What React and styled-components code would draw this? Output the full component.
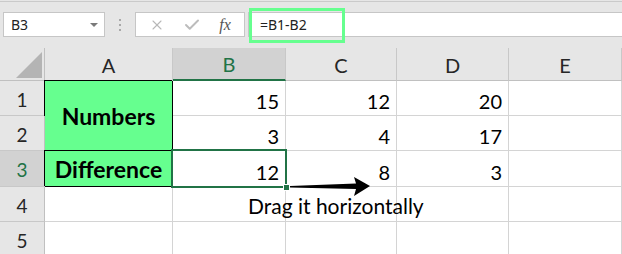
import React from 'react';
import styled, { createGlobalStyle } from 'styled-components';
import { X, Check } from 'lucide-react';

const GlobalStyle = createGlobalStyle`
  html, body { margin: 0; padding: 0; background: #fff; }
  body {
    width: 622px;
    height: 254px;
    overflow: hidden;
    font-family: Lato, "Liberation Sans", sans-serif;
  }
`;

const Window = styled.div`
  width: 622px;
  height: 254px;
  overflow: hidden;
`;

const Toolbar = styled.div`
  height: 48px;
  box-sizing: border-box;
  display: flex;
  align-items: flex-start;
  padding: 12px 0 0 3px;
  background: linear-gradient(#e6e6e6 1px, #cacaca 1px 2px, #e6e6e6 2px);
  font-family: "Noto Sans", "Open Sans", sans-serif;
  font-size: 14px;
  color: #222;
`;

const NameBox = styled.div`
  width: 102px;
  height: 25px;
  box-sizing: border-box;
  border: 1px solid #c6c6c6;
  background: #fff;
  display: flex;
  align-items: center;
  justify-content: space-between;
  padding: 0 6px 0 7px;
`;

const Caret = styled.span`
  width: 0;
  height: 0;
  border-left: 4px solid transparent;
  border-right: 4px solid transparent;
  border-top: 4px solid #7a7a7a;
`;

const Grip = styled.div`
  width: 30px;
  height: 25px;
  display: flex;
  flex-direction: column;
  align-items: center;
  justify-content: center;
  gap: 3px;

  span {
    width: 2px;
    height: 2px;
    background: #a8a8a8;
  }
`;

const FxBox = styled.div`
  width: 110px;
  height: 25px;
  box-sizing: border-box;
  border: 1px solid #c6c6c6;
  background: #fff;
  display: flex;
  align-items: center;
  justify-content: space-around;
  padding: 0 4px;
`;

const Fx = styled.span`
  font-family: "Liberation Serif", serif;
  font-style: italic;
  font-size: 16px;
  color: #555;
`;

const FormulaBar = styled.div`
  flex: 1;
  margin-left: 3px;
  height: 25px;
  box-sizing: border-box;
  border: 1px solid #c6c6c6;
  border-right: none;
  background: #fff;
  position: relative;
  display: flex;
  align-items: center;
  padding-left: 11px;
`;

const Highlight = styled.div`
  position: absolute;
  left: 0;
  top: -5px;
  width: 96px;
  height: 35px;
  box-sizing: border-box;
  border: 3px solid #66ff8f;
`;

const Sheet = styled.div`
  position: relative;
  display: grid;
  grid-template-columns: 45px 128px 113px 111px 112px 113px;
  grid-template-rows: 33px 35px 35px 36px 35px 35px;
`;

const Corner = styled.div`
  box-sizing: border-box;
  background: #e6e6e6;
  border-right: 1px solid #c0c0c0;
  border-bottom: 1px solid #c0c0c0;
  display: flex;
  align-items: flex-end;
  justify-content: flex-end;
  padding: 0 2px 2px 0;

  span {
    width: 26px;
    height: 26px;
    background: #b4b4b4;
    clip-path: polygon(100% 0, 100% 100%, 0 100%);
  }
`;

const ColHead = styled.div`
  box-sizing: border-box;
  background: ${p => (p.$active ? '#d2d2d2' : '#e6e6e6')};
  color: ${p => (p.$active ? '#217346' : '#262626')};
  border-right: 1px solid #c8c8c8;
  border-bottom: ${p => (p.$active ? '2px solid #217346' : '1px solid #c0c0c0')};
  display: flex;
  align-items: center;
  justify-content: center;
  font-size: 20px;
  padding-top: 1px;
`;

const RowHead = styled.div`
  box-sizing: border-box;
  background: ${p => (p.$active ? '#d2d2d2' : '#e6e6e6')};
  color: ${p => (p.$active ? '#217346' : '#262626')};
  border-right: 1px solid #c0c0c0;
  border-bottom: 1px solid #c8c8c8;
  display: flex;
  align-items: center;
  justify-content: center;
  font-size: 19px;
  padding-top: 2px;
`;

const Cell = styled.div`
  position: relative;
  box-sizing: border-box;
  border-right: 1px solid #d4d4d4;
  border-bottom: 1px solid #d4d4d4;
  display: flex;
  align-items: flex-end;
  justify-content: flex-end;
  padding: 0 6px 2px 0;
  font-size: 20px;
  color: #000;
`;

const LabelCell = styled.div`
  grid-row: span ${p => p.$span || 1};
  box-sizing: border-box;
  background: #66ff8f;
  border-right: 1px solid #000;
  border-bottom: 1px solid #000;
  box-shadow: -1px -1px 0 #000;
  display: flex;
  align-items: center;
  justify-content: center;
  font-weight: 700;
  font-size: 23px;
  color: #000;
  padding-top: 1px;
`;

const Selected = styled(Cell)`
  &::after {
    content: "";
    position: absolute;
    left: -2px;
    top: -2px;
    right: -2px;
    bottom: -2px;
    border: 2px solid #217346;
    z-index: 2;
  }
`;

const FillHandle = styled.span`
  position: absolute;
  right: -5px;
  bottom: -5px;
  width: 5px;
  height: 5px;
  background: #217346;
  border: 1px solid #fff;
  z-index: 3;
`;

const Arrow = styled.svg`
  position: absolute;
  left: 288px;
  top: 128px;
  z-index: 4;
`;

const Note = styled.div`
  position: absolute;
  left: 248px;
  top: 145px;
  font-size: 21px;
  line-height: 25px;
  color: #000;
  white-space: nowrap;
  z-index: 4;
`;

const cols = ['A', 'B', 'C', 'D', 'E'];

const rows = [
  { n: 1, values: ['15', '12', '20', ''] },
  { n: 2, values: ['3', '4', '17', ''] },
  { n: 3, values: ['12', '8', '3', ''], active: true },
  { n: 4, values: ['', '', '', ''] },
  { n: 5, values: ['', '', '', ''] },
];

const labelFor = n => {
  if (n === 1) return <LabelCell $span={2}>Numbers</LabelCell>;
  if (n === 3) return <LabelCell>Difference</LabelCell>;
  if (n === 2) return null;
  return <Cell />;
};

export default function App() {
  return (
    <Window>
      <GlobalStyle />
      <Toolbar>
        <NameBox>
          B3
          <Caret />
        </NameBox>
        <Grip>
          <span />
          <span />
          <span />
        </Grip>
        <FxBox>
          <X size={16} color="#b8b8b8" strokeWidth={1.6} />
          <Check size={18} color="#bcbcbc" strokeWidth={2.6} />
          <Fx>fx</Fx>
        </FxBox>
        <FormulaBar>
          =B1-B2
          <Highlight />
        </FormulaBar>
      </Toolbar>

      <Sheet>
        <Corner>
          <span />
        </Corner>
        {cols.map(c => (
          <ColHead key={c} $active={c === 'B'}>
            {c}
          </ColHead>
        ))}
        {rows.map(r => (
          <React.Fragment key={r.n}>
            <RowHead $active={r.active}>{r.n}</RowHead>
            {labelFor(r.n)}
            {r.values.map((v, i) =>
              r.active && i === 0 ? (
                <Selected key={i}>
                  {v}
                  <FillHandle />
                </Selected>
              ) : (
                <Cell key={i}>{v}</Cell>
              )
            )}
          </React.Fragment>
        ))}

        <Arrow width="84" height="22" viewBox="0 0 84 22">
          <polygon points="2,10 68,7.5 66,1 82,10 66,20 68,13 2,11.5" fill="#000" />
        </Arrow>
        <Note>Drag it horizontally</Note>
      </Sheet>
    </Window>
  );
}
